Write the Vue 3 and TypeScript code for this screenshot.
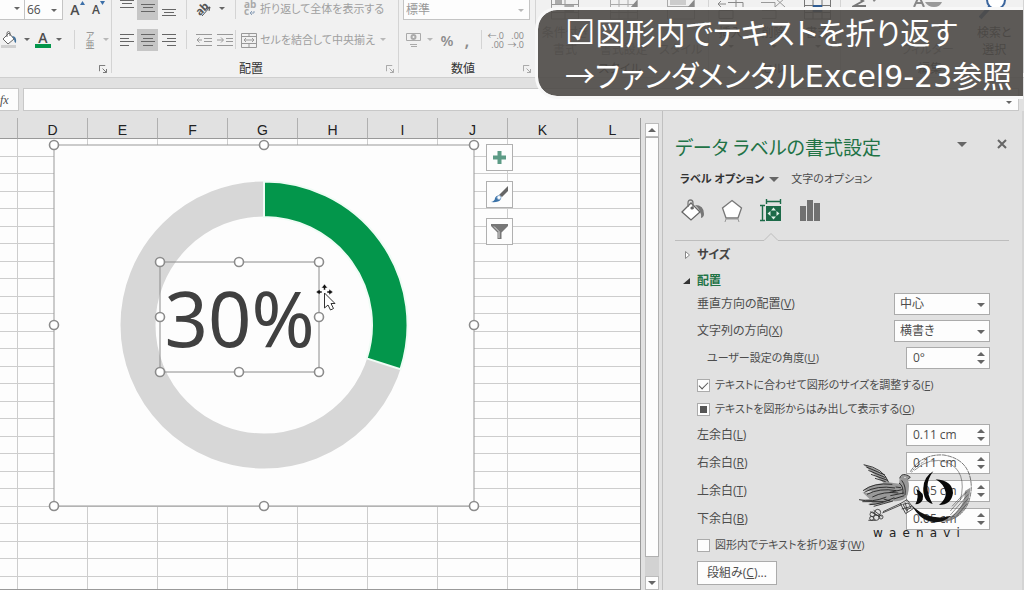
<script setup lang="ts">
import { ref } from 'vue'

interface Choice { id: string; label: string; key: string; value: string; options: string[] }
interface Margin { id: string; label: string; key: string; value: string }

const columns: string[] = ['', 'D', 'E', 'F', 'G', 'H', 'I', 'J', 'K', 'L']
const rowCount = 26

const choices: Choice[] = [
  { id: 'valign', label: '垂直方向の配置', key: 'V', value: '中心', options: ['上', '中心', '下'] },
  { id: 'direction', label: '文字列の方向', key: 'X', value: '横書き', options: ['横書き', '縦書き'] },
]
const margins = ref<Margin[]>([
  { id: 'left', label: '左余白', key: 'L', value: '0.11 cm' },
  { id: 'right', label: '右余白', key: 'R', value: '0.11 cm' },
  { id: 'top', label: '上余白', key: 'T', value: '0.05 cm' },
  { id: 'bottom', label: '下余白', key: 'B', value: '0.05 cm' },
])
const angle = ref('0°')
const fitShape = ref(true)
const wrapText = ref(false)

const chartHandles = [[0, 0], [210, 0], [420, 0], [0, 180], [420, 180], [0, 361], [210, 361], [420, 361]]
const labelHandles = [[0, 0], [79, 0], [159, 0], [0, 55], [159, 55], [0, 110], [79, 110], [159, 110]]
const brand = 'waenavi'.split('')
</script>

<template>
  <div class="app">
    <header class="ribbon">
      <section class="group font-group">
        <div class="line first">
          <button class="tool name-drop" aria-label="フォント"><i class="caret"></i></button>
          <span class="combo size-combo">
            <select aria-label="フォント サイズ"><option>66</option></select><i class="caret"></i>
          </span>
          <button class="tool w21 letter" aria-label="拡大">A<svg class="tick" viewBox="0 0 5 4"><path d="M0 4L2.500 0L5 4z" fill="#3c6fa8" /></svg></button>
          <button class="tool w21 letter small" aria-label="縮小">A<svg class="tick" viewBox="0 0 5 4"><path d="M0 0h5L2.500 4z" fill="#3c6fa8" /></svg></button>
        </div>
        <div class="line">
          <button class="tool w19" aria-label="塗りつぶし">
            <svg width="17" height="17" viewBox="0 0 17 17"><path d="M2 8l6-6 5 6-6 5z" fill="#fff" stroke="#666" /><path d="M6 6V1.500q1.500-2 3 0V5" fill="none" stroke="#666" /><path d="M11 5q5 0 4 7q-2-1-2-4z" fill="#41719c" /><path d="M0 14h15v3H0z" fill="#d0d0d0" /></svg>
          </button>
          <i class="caret pad"></i>
          <button class="tool w19 font-color" aria-label="フォントの色">A</button>
          <i class="caret pad"></i>
          <i class="bar"></i>
          <button class="tool ruby" aria-label="ふりがな"><span>ア</span><span>亜</span></button>
          <i class="caret pad pale"></i>
        </div>
        <div class="caption"><span></span><svg class="launch" viewBox="0 0 9 9"><path d="M.5 7V.5H7M4 4l4 4M8.500 4.500v4h-4" fill="none" stroke="#666" /></svg></div>
      </section>

      <section class="group align-group">
        <div class="line first">
          <button class="tool w21" aria-label="上揃え"><svg width="14" height="18"><path d="M0 .5h14M2 3.500h10M0 7.500h14" stroke="#666" /></svg></button>
          <button class="tool w21 on" aria-label="上下中央揃え"><svg width="14" height="18"><path d="M0 4.500h14M2 7.500h10M0 11.500h14" stroke="#666" /></svg></button>
          <button class="tool w21" aria-label="下揃え"><svg width="14" height="18"><path d="M0 9.500h14M2 12.500h10M0 15.500h14" stroke="#666" /></svg></button>
          <i class="bar"></i>
          <button class="tool w21" aria-label="方向"><svg width="18" height="18" viewBox="0 0 18 18"><text x="1" y="13" font-size="11" transform="rotate(-45 7 10)" fill="#555" font-weight="700">ab</text><path d="M7 16L15 7M15 7l-4 1M15 7l-1 4" fill="none" stroke="#555" /></svg></button>
          <i class="caret pad"></i>
          <i class="bar gap"></i>
          <button class="tool wide"><svg width="17" height="18" viewBox="0 0 17 18"><text x="3" y="8" font-size="10" fill="#aaa" font-weight="700">ab</text><text x="3" y="15" font-size="10" fill="#aaa" font-weight="700">c</text><path d="M9 13h4v-2M9 13l2-2M9 13l2 2" fill="none" stroke="#8ca0b8" /></svg>折り返して全体を表示する</button>
        </div>
        <div class="line">
          <button class="tool w21" aria-label="左揃え"><svg width="14" height="14"><path d="M0 1.500h14M0 5.500h9M0 8.500h14M0 12.500h9" stroke="#666" /></svg></button>
          <button class="tool w21 on" aria-label="中央揃え"><svg width="14" height="14"><path d="M0 1.500h14M2 5.500h10M0 8.500h14M2 12.500h10" stroke="#666" /></svg></button>
          <button class="tool w21" aria-label="右揃え"><svg width="14" height="14"><path d="M0 1.500h14M5 5.500h9M0 8.500h14M5 12.500h9" stroke="#666" /></svg></button>
          <i class="bar"></i>
          <button class="tool w21" aria-label="インデントを減らす"><svg width="16" height="14"><path d="M0 1.500h16M8 5.500h8M8 8.500h8M0 12.500h16M6 7H1M3.500 4.500L1 7l2.500 2.500" fill="none" stroke="#999" /></svg></button>
          <button class="tool w21" aria-label="インデントを増やす"><svg width="16" height="14"><path d="M0 1.500h16M9 5.500h7M9 8.500h7M0 12.500h16M0 7h6M4 4.500L6.500 7L4 9.500" fill="none" stroke="#999" /></svg></button>
          <i class="bar tight"></i>
          <button class="tool wide"><svg width="17" height="16" viewBox="0 0 17 16"><path d="M.5 1.500h15v14H.5zM.5 4.500h15M.5 11.500h15M8 1.500v3M8 11.500v4M3 8h10M5 6L3 8l2 2M11 6l2 2-2 2" fill="none" stroke="#999" /></svg>セルを結合して中央揃え</button>
          <i class="caret pad pale"></i>
        </div>
        <div class="caption"><span>配置</span><svg class="launch pale" viewBox="0 0 9 9"><path d="M.5 7V.5H7M4 4l4 4M8.500 4.500v4h-4" fill="none" stroke="#666" /></svg></div>
      </section>

      <section class="group number-group">
        <div class="line first">
          <span class="combo format-combo">
            <select aria-label="表示形式"><option>標準</option></select><i class="caret pale"></i>
          </span>
        </div>
        <div class="line">
          <button class="tool num" aria-label="通貨"><svg width="17" height="16" viewBox="0 0 17 16"><path d="M1.500 1.500h14v7h-14zM5 12.500h7M6 14.500h6" fill="none" stroke="#aaa" /><circle cx="8.500" cy="5" r="2" fill="none" stroke="#aaa" stroke-width="2" /></svg></button>
          <i class="caret pad pale"></i>
          <button class="tool num symbol">%</button>
          <button class="tool num symbol comma">,</button>
          <i class="bar"></i>
          <button class="tool num decimal"><span>←.0</span><span>.00</span></button>
          <button class="tool num decimal"><span>.00</span><span>→.0</span></button>
        </div>
        <div class="caption"><span>数値</span><svg class="launch pale" viewBox="0 0 9 9"><path d="M.5 7V.5H7M4 4l4 4M8.500 4.500v4h-4" fill="none" stroke="#666" /></svg></div>
      </section>

      <section class="group more style-group">
        <div class="bigs">
          <button class="big"><svg width="28" height="20"><path d="M.5-6v25h27V-6M.5 4.500h27M.5 12.500h27M14-1v20" fill="none" stroke="#999" /><path d="M4 0h7v4H4zM14 5h9v7h-9z" fill="#aaa" /></svg><span>条件付き<br>書式</span></button>
          <button class="big"><svg width="28" height="20"><path d="M.5-6v25h27V-6M.5 4.500h27M.5 12.500h27M9-1v20M18-1v20" fill="none" stroke="#aaa" /><path d="M20 8l7-8v8z" fill="#888" /></svg><span><br>書式設定</span></button>
          <button class="big"><svg width="28" height="20"><path d="M.5-6v25h27V-6M.5 6.500h27" fill="none" stroke="#aaa" /><path d="M3-1h16v6H3z" fill="#ccc" /><path d="M20 8l7-8v8z" fill="#888" /></svg><span><br>スタイル</span></button>
        </div>
        <div class="caption"><span>スタイル</span></div>
      </section>
      <section class="group more cell-group">
        <div class="bigs">
          <button class="big dark"><svg width="26" height="20"><path d="M0 4h8M3 1L0 4l3 3M10 2.500h15v5H10M1 10.500h14v8H1zM18-1v8" fill="none" stroke="#888" /></svg><span>挿入</span><i class="caret"></i></button>
          <button class="big dark"><svg width="26" height="20"><path d="M0 2.500h14v5H0M1 10.500h14v8H1M14-2l10 9M24-2L14 7" fill="none" stroke="#999" /></svg><span>削除</span><i class="caret"></i></button>
          <button class="big dark"><svg width="28" height="20"><path d="M.5-1v20h26V-1M.5 5.500h26M.5 12.500h26M9 0v19M18 0v19" fill="none" stroke="#777" /><path d="M9 5h9v7H9z" fill="#2f5c94" /></svg><span>書式</span><i class="caret"></i></button>
        </div>
        <div class="caption"><span>セル</span></div>
      </section>
      <section class="group more edit-group">
        <div class="bigs">
          <button class="big"><svg width="26" height="20"><path d="M5-3l6 4-9 5h12" fill="none" stroke="#777" stroke-width="2" /><path d="M20-1h5l-3 3z" fill="#888" /></svg></button>
          <button class="big"><svg width="30" height="20"><path d="M1 7L6-4l5 11M3 3h6" fill="none" stroke="#888" stroke-width="2" /><path d="M12 2h17q-2 5-8 5t-9-5z" fill="#999" /></svg><span><br>フィルター</span></button>
          <button class="big dark"><svg width="30" height="20"><circle cx="17" cy="0" r="9" fill="#fff" stroke="#3b659d" stroke-width="2" /><path d="M11 7L1 18" stroke="#3b659d" stroke-width="4" /></svg><span>検索と<br>選択</span></button>
        </div>
        <div class="caption"><span>編集</span></div>
      </section>
    </header>

    <div class="formula">
      <button class="fx" aria-label="関数の挿入"><em>fx</em></button>
      <div class="formula-box"><input type="text" aria-label="数式バー"><i class="caret"></i></div>
    </div>

    <div class="work">
      <main class="sheet">
        <table>
          <thead>
            <tr><th v-for="(c, i) in columns" :key="i" scope="col">{{ c }}</th></tr>
          </thead>
          <tbody>
            <tr v-for="r in rowCount" :key="r"><td v-for="(c, i) in columns" :key="i"></td></tr>
          </tbody>
        </table>

        <div class="chart">
          <svg class="art" width="420" height="361" viewBox="0 0 420 361">
            <rect width="420" height="361" fill="#fdfdfd" stroke="#999" />
            <circle cx="210" cy="180" r="126" fill="none" stroke="#d7d7d7" stroke-width="35" />
            <path d="M210 36.500A143.500 143.500 0 0 1 346.500 224.300L312.700 213.400A108 108 0 0 0 210 72z" fill="#03964b" stroke="#effcf5" stroke-width="2" />
            <circle v-for="(h, i) in chartHandles" :key="i" :cx="h[0]" :cy="h[1]" r="4.500" fill="#fff" stroke="#8c8c8c" stroke-width="1.600" />
          </svg>
          <div class="data-label">
            <span>30%</span>
            <svg class="art" width="159" height="110" viewBox="0 0 159 110">
              <rect width="159" height="110" fill="none" stroke="#8c8c8c" />
              <circle v-for="(h, i) in labelHandles" :key="i" :cx="h[0]" :cy="h[1]" r="4.500" fill="#fff" stroke="#8c8c8c" stroke-width="1.600" />
            </svg>
          </div>
          <svg class="pointer" width="20" height="28" viewBox="0 0 20 28">
            <path d="M8.500 0l3 4h-2v2h-2V4h-2zM0 8l4-3v2h2v2H4v2zM17 8l-4-3v2h-2v2h2v2z" fill="#111" stroke="#fff" stroke-width=".5" />
            <path d="M8.500 9v15l3.500-3 2.500 5 3-1.500-2.500-5h4z" fill="#fff" stroke="#333" />
          </svg>
        </div>
        <div class="chart-tools">
          <button aria-label="グラフ要素"><svg width="15" height="15"><path d="M7.500 1v13M1 7.500h13" stroke="#5d9b86" stroke-width="4" /></svg></button>
          <button aria-label="グラフ スタイル"><svg width="19" height="19" viewBox="0 0 19 19"><path d="M18 1v5l-6 6-3-2z" fill="#666" /><path d="M1 17q4-1 4-4 2-4 5-1 2 3-2 4.500-3 1-7 .5z" fill="#3c73a8" /><circle cx="9" cy="12.500" r="2" fill="#fff" stroke="#8badd0" /></svg></button>
          <button aria-label="グラフ フィルター"><svg width="19" height="19" viewBox="0 0 19 19"><path d="M1 2h17v2l-6.500 6.500V17h-4v-6.500L1 4z" fill="#777" /><path d="M4 4.500l5 5V16" fill="none" stroke="#ddd" /></svg></button>
        </div>
      </main>

      <div class="scroll">
        <button aria-label="上へ"><i class="caret up"></i></button>
        <div class="thumb"></div>
        <div class="track"></div>
        <button aria-label="下へ"><i class="caret"></i></button>
      </div>

      <aside class="pane">
        <div class="pane-head">
          <h1>データ ラベルの書式設定</h1>
          <button class="tool menu" aria-label="作業ウィンドウ オプション"><i class="caret big-caret"></i></button>
          <button class="tool" aria-label="閉じる"><svg width="10" height="10"><path d="M1 1l8 8M9 1L1 9" stroke="#666" stroke-width="2" /></svg></button>
        </div>
        <nav class="tabs">
          <button class="tool active">ラベル オプション<i class="caret big-caret"></i></button>
          <button class="tool">文字のオプション</button>
        </nav>
        <div class="pane-icons">
          <button class="tool" aria-label="塗りつぶしと線"><svg width="24" height="24" viewBox="0 0 24 24"><path d="M1 13L10 4l9 9-9 8z" fill="#fff" stroke="#666" stroke-width="1.300" /><path d="M7 8V4q0-3 2.500-3T12 4v6" fill="none" stroke="#777" stroke-width="1.300" /><circle cx="11" cy="9" r="1.600" fill="#666" /><path d="M14 6q9 0 9 9 0 3-3 4 1-7-6-13z" fill="#777" /></svg></button>
          <button class="tool" aria-label="効果"><svg width="24" height="24" viewBox="0 0 24 24"><path d="M12 1.500l9.500 7.500-3.500 10H6L2.500 9z" fill="#fff" stroke="#777" stroke-width="1.300" /><path d="M6 20l-1 3M18 20l1 3M6 20h12" stroke="#999" /></svg></button>
          <button class="tool" aria-label="サイズとプロパティ"><svg width="24" height="24" viewBox="0 0 24 24"><path d="M7 7h15v15H7z" fill="#1c6a48" /><path d="M7.500 0v5M21.500 0v5M8 2.500h13M1 6.500h5M1 21.500h5M3.500 7v14" stroke="#1c6a48" stroke-width="1.400" /><path d="M14.500 8.500l2.500 3h-5zM14.500 20.500l2.500-3h-5zM8.500 14.500l3-2.500v5zM20.500 14.500l-3-2.500v5z" fill="#e1f0e8" /></svg></button>
          <button class="tool" aria-label="ラベル オプション"><svg width="24" height="24" viewBox="0 0 24 24"><path d="M2 7h6v15H2zM9 1h6v21H9zM16 4h6v18h-6z" fill="#707070" /></svg></button>
        </div>
        <div class="rule"><i></i><svg width="14" height="8"><path d="M0 7.500L7 .5l7 7" fill="none" stroke="#bdbdbd" /></svg><i class="rest"></i></div>

        <button class="tool section"><svg width="12" height="10"><path d="M3.500 1.500v7l4-3.500z" fill="#fff" stroke="#888" /></svg>サイズ</button>
        <button class="tool section open"><svg width="12" height="10"><path d="M8 2v6H1z" fill="#333" /></svg>配置</button>

        <div v-for="c in choices" :key="c.id" class="field">
          <label :for="c.id">{{ c.label }}(<u>{{ c.key }}</u>)</label>
          <span class="combo">
            <select :id="c.id" :value="c.value"><option v-for="o in c.options" :key="o">{{ o }}</option></select><i class="caret"></i>
          </span>
        </div>
        <div class="field indent">
          <label for="angle">ユーザー設定の角度(<u>U</u>)</label>
          <span class="spin"><input id="angle" v-model="angle" type="text"><span class="steps"><button aria-label="増やす"><i class="caret up"></i></button><button aria-label="減らす"><i class="caret"></i></button></span></span>
        </div>
        <label class="check"><input v-model="fitShape" type="checkbox"><span>テキストに合わせて図形のサイズを調整する(<u>F</u>)</span></label>
        <label class="check"><input type="checkbox" :indeterminate="true"><span>テキストを図形からはみ出して表示する(<u>O</u>)</span></label>
        <div v-for="m in margins" :key="m.id" class="field margin">
          <label :for="m.id">{{ m.label }}(<u>{{ m.key }}</u>)</label>
          <span class="spin"><input :id="m.id" v-model="m.value" type="text"><span class="steps"><button aria-label="増やす"><i class="caret up"></i></button><button aria-label="減らす"><i class="caret"></i></button></span></span>
        </div>
        <label class="check"><input v-model="wrapText" type="checkbox"><span>図形内でテキストを折り返す(<u>W</u>)</span></label>
        <button class="columns">段組み(<u>C</u>)...</button>

        <div class="mark">
          <svg width="115" height="73" viewBox="50 36 345 219">
            <g fill="none" stroke="#333" stroke-width="2">
              <path d="M210 92Q245 38 310 42Q392 55 393 140Q388 226 315 240" stroke-dasharray="14 2" />
              <path d="M222 88Q270 45 320 64Q382 90 360 178" stroke-width="1.500" />
              <path d="M214 94Q225 74 252 62" stroke-dasharray="5 3" />
            </g>
            <path d="M218 198Q270 250 328 228Q372 204 374 150L390 140Q388 212 332 238Q262 258 218 198z" fill="#777" fill-opacity=".75" />
            <path d="M214 192Q258 240 330 226Q300 254 258 238Q232 226 214 192z" fill="#111" />
            <path d="M335 196l40-42M330 210l50-58M330 222l54-62M336 228l48-56M348 226l32-38" stroke="#333" stroke-width="1.500" />
            <g fill="#080808">
              <path d="M228 144Q254 156 247 176Q242 188 225 190Q237 168 228 144z" />
              <path d="M279 91Q245 134 277 189Q248 182 249 141Q251 106 279 91z" />
              <path d="M286 115Q336 118 338 156Q333 192 296 192Q318 174 316 154Q312 130 286 115z" />
            </g>
            <path d="M178 112Q182 100 194 101Q204 103 210 109L202 115Q210 134 202 162Q190 184 156 180Q116 192 88 192Q76 190 98 184L56 176L88 174L66 154Q88 158 96 152L70 148Q90 130 130 126L86 86L70 71Q124 84 144 124L176 128z" fill="#999" />
            <g fill="none" stroke="#1a1a1a" stroke-width="2.500">
              <path d="M70 71Q130 82 145 124M78 78l56 24M84 88l52 22M92 100l50 18M104 112l32 10" />
              <path d="M68 149Q100 124 156 130M72 154Q110 132 164 141M80 160Q118 140 168 149M96 168Q130 150 174 156" />
              <path d="M56 176Q96 186 138 168M66 182l64 0M88 191Q120 190 162 170M100 196Q130 188 158 180" />
              <path d="M176 126Q190 134 188 160M184 118q14 18 10 44M178 112q4-14 18-11 8 2 14 8l-8 6" />
              <path d="M148 154l38-8M150 164l40-8M160 174l32-10M166 138l16 2M130 174l20 6" />
            </g>
            <circle cx="194" cy="109" r="2" fill="#fff" />
            <g fill="none" stroke="#333" stroke-width="2.500">
              <path d="M126 216l60-26M128 212l54-25M180 188l20-12 20 26-24 16zM188 190l16-4 8 14-14 8zM194 184l8 28M184 204l30-8" />
              <circle cx="112" cy="214" r="9" /><circle cx="96" cy="220" r="7" /><circle cx="94" cy="232" r="6" /><circle cx="108" cy="230" r="8" /><circle cx="122" cy="228" r="6" /><path d="M100 208l24 18M84 238h22M90 212l30 16" />
            </g>
          </svg>
          <div class="brand"><span v-for="(b, i) in brand" :key="i">{{ b }}</span></div>
        </div>
      </aside>
    </div>

    <div class="banner">
      <p><span class="sym">☑</span>図形内でテキストを折り返す</p>
      <p><span class="arrow">→</span>ファンダメンタルExcel9-23参照</p>
    </div>
  </div>
</template>

<style>
body { background: #f3f3f3; }
</style>

<style scoped>
* { box-sizing: border-box; }
.app {
  position: relative;
  display: flex;
  flex-direction: column;
  padding-bottom: 1px;
  overflow: hidden;
  background: #e1e1e1;
  color: #4d4d4d;
  font: 12px/18px "Open Sans", "Noto Sans CJK JP", sans-serif;
  font-feature-settings: "palt";
}
button, input, select { font: inherit; font-feature-settings: inherit; color: inherit; margin: 0; padding: 0; border: 0; border-radius: 0; background: none; }
select { appearance: none; width: 100%; height: 100%; }
.tool { display: inline-flex; align-items: center; justify-content: center; flex: none; height: 22px; }
svg { flex: none; }
.caret { display: inline-block; flex: none; width: 0; height: 0; border: 3px solid transparent; border-top-color: #666; border-bottom: 0; }
.caret.up { border-top: 0; border-bottom: 3px solid #666; }
.caret.pale { border-top-color: #b8b8b8; }
.caret.pad { margin: 0 5px; }
.big-caret { border-width: 5px 5px 0; }
.combo { position: relative; display: inline-flex; background: #fdfdfd; border: 1px solid #ababab; }
.combo .caret { position: absolute; right: 5px; top: 50%; margin-top: -1px; pointer-events: none; }

.ribbon { display: flex; height: 78px; background: #f1f1f1; border-bottom: 1px solid #cfcfcf; }
.group { display: flex; flex-direction: column; flex: none; height: 73px; border-right: 1px solid #d4d4d4; white-space: nowrap; }
.line { display: flex; align-items: center; height: 23px; margin-top: 8px; }
.line.first { height: 20px; margin-top: 0; align-items: flex-start; }
.line.first > .caret, .line.first > .caret.pad { margin-top: 7px; }
.w19 { width: 19px; }
.w21 { width: 21px; }
.on { background: #c6c6c6; }
.line.first .tool { height: 20px; align-items: flex-start; }
.bar { flex: none; width: 1px; height: 19px; margin: 0 7px; background: #d4d4d4; }
.caption { display: flex; align-items: center; height: 18px; margin-top: auto; margin-bottom: -5px; padding-right: 4px; color: #333; }
.caption span { flex: 1; text-align: center; }
.launch { width: 8px; height: 8px; }
.launch.pale { opacity: .6; }

.font-group { width: 112px; }
.name-drop { width: 24px; padding: 7px 0 0 10px; background: #fdfdfd; border-bottom: 1px solid #c4c4c4; }
.size-combo { width: 39px; height: 20px; margin-right: 4px; border-top: 0; border-color: #c4c4c4; }
.size-combo select { padding-left: 2px; }
.letter { font-size: 14px; line-height: 20px; font-weight: 600; }
.letter.small { font-size: 12px; }
.tick { width: 5px; height: 4px; margin-top: 1px; }
.font-color { height: 17px; border-bottom: 4px solid #03964b; font-size: 14px; line-height: 14px; font-weight: 600; width: 16px; }
.ruby { flex-direction: column; width: 16px; font-size: 9px; line-height: 9px; color: #888; }
.align-group { width: 287px; padding-left: 4px; }
.align-group .bar { margin-right: 6px; }
.align-group .bar.gap { margin: 0 5px 0 5px; }
.align-group .bar.tight { margin: 0 5px 0 0; }
.align-group .wide { color: #a0a0a0; gap: 2px; justify-content: flex-start; font-size: 11px; }
.number-group { width: 137px; padding: 0 4px; }
.number-group .caption { padding-right: 0; }
.number-group .pad { margin: 0 4px; }
.number-group .bar { margin: 0 4px; }
.num { width: 20px; }
.format-combo { width: 127px; height: 20px; border-top: 0; color: #999; border-color: #c4c4c4; }
.format-combo select { padding-left: 2px; }
.symbol { font-size: 15px; color: #8c8c8c; font-weight: 600; }
.comma { height: 30px; font-size: 18px; }
.decimal { flex-direction: column; font-size: 9px; line-height: 9px; color: #888; align-items: flex-end; padding-right: 2px; }
.more { color: #888; }
.style-group { width: 173px; }
.cell-group { width: 132px; }
.edit-group { flex: 1; }
.bigs { display: flex; justify-content: space-around; }
.big { display: flex; flex-direction: column; align-items: center; gap: 4px; line-height: 17px; color: #888; overflow: hidden; }
.big.dark { color: #333; }

.formula { display: flex; gap: 4px; height: 33px; padding: 10px 5px 0 0; }
.fx { width: 19px; height: 23px; background: #fdfdfd; border: 1px solid #c8c8c8; border-left: 0; text-align: left; font-family: "Liberation Serif", serif; }
.formula-box { display: flex; align-items: center; flex: 1; height: 23px; padding-right: 6px; background: #fdfdfd; border: 1px solid #c8c8c8; }
.formula-box input { flex: 1; min-width: 0; }
.formula-box .caret { margin-top: 6px; }

.work { display: flex; }
.sheet { position: relative; flex: 1; min-width: 0; padding-top: 7px; margin-right: 4px; }
table { width: 100%; table-layout: fixed; border-collapse: separate; border-spacing: 0; background: #fdfdfd; border-right: 1px solid #999; border-bottom: 1px solid #999; }
th { width: 70px; height: 21px; padding: 4px 0 0; background: #e1e1e1; border-right: 1px solid #b0b0b0; border-bottom: 1px solid #999; font: 14px/16px "Liberation Sans", sans-serif; color: #222; }
th:first-child { width: 18px; }
th:last-child { width: auto; border-right-color: #e1e1e1; padding-left: 8px; }
td { height: 18px; padding: 0; border-right: 1px solid #cdcdcd; border-bottom: 1px solid #cdcdcd; }
td:last-child { border-right: 0; }
tr:nth-child(even) td { height: 17px; }
tr:last-child td { height: 12px; border-bottom: 0; }

.chart { position: absolute; left: 54px; top: 34px; width: 420px; height: 361px; }
.art { position: absolute; inset: 0; overflow: visible; }
.data-label { position: absolute; left: 106px; top: 117px; width: 159px; height: 110px; text-align: center; font: 76px/112px "Noto Sans", sans-serif; color: #404040; }
.pointer { position: absolute; left: 262px; top: 139px; }
.chart-tools { position: absolute; left: 486px; top: 33px; display: flex; flex-direction: column; gap: 10px; }
.chart-tools button { display: grid; place-items: center; width: 27px; height: 27px; background: #fdfdfd; border: 1px solid #b0b0b0; }

.scroll { display: flex; flex-direction: column; width: 14px; margin: 12px 3px 0 0; }
.scroll button { display: grid; place-items: center; height: 14px; background: #fdfdfd; border: 1px solid #bbb; }
.scroll .caret { border-width: 4px 4px 0; }
.scroll .caret.up { border-width: 0 4px 4px; }
.thumb { flex: 1; background: #fdfdfd; border: 1px solid #b0b0b0; }
.track { height: 19px; background: #d2d2d2; }

.pane { position: relative; flex: none; width: 362px; padding: 23px 32px 0 34px; border-left: 1px solid #c0c0c0; border-right: 2px solid #d4d4d4; }
.pane-head { display: flex; align-items: center; height: 28px; margin: 0 -17px 0 -22px; }
h1 { flex: 1; margin: 0; font-size: 19px; line-height: 30px; font-weight: 400; color: #217346; white-space: nowrap; }
.pane-head .tool { height: 20px; margin-bottom: 8px; }
.menu { margin-right: 30px; }
.tabs { display: flex; gap: 12px; margin: 8px 0 0 -17px; }
.tabs .tool { height: 18px; gap: 5px; font-size: 11px; }
.tabs .active { font-weight: 600; color: #333; }
.pane-icons { display: flex; gap: 15px; margin: 10px 0 0 -16px; }
.pane-icons .tool { height: 26px; }
.rule { display: flex; align-items: flex-end; height: 8px; margin: 9px -19px 0 -22px; }
.rule i { width: 89px; height: 1px; background: #bdbdbd; }
.rule .rest { width: auto; flex: 1; }
.section { display: flex; gap: 3px; height: 18px; margin: 5px 0 0 -15px; font-weight: 700; color: #444; }
.section.open { margin-top: 8px; color: #217346; margin-bottom: 3px; }
.field { display: flex; align-items: center; justify-content: space-between; height: 22px; margin-bottom: 5px; }
.field.margin { margin-bottom: 6px; }
.field .combo { width: 96px; height: 22px; }
.field .combo select { padding-left: 5px; }
.field .combo .caret { right: 4px; border-width: 4px 4px 0; }
.field.indent { padding-left: 10px; margin-bottom: 7px; }
.indent label { font-size: 11px; }
.spin { display: flex; width: 84px; height: 22px; background: #fdfdfd; border: 1px solid #ababab; }
.spin input { flex: 1; min-width: 0; padding-left: 6px; }
.steps { display: flex; flex-direction: column; justify-content: center; gap: 3px; width: 12px; }
.steps button { display: flex; height: 5px; align-items: center; }
.steps .caret { border-width: 4px 4px 0; }
.steps .caret.up { border-width: 0 4px 4px; }
.check { display: flex; align-items: center; gap: 5px; height: 18px; margin-bottom: 6px; font-size: 11px; white-space: nowrap; }
.check input { appearance: none; display: grid; place-items: center; flex: none; width: 13px; height: 13px; background: #fdfdfd; border: 1px solid #ababab; }
.check input:indeterminate::before { content: ""; width: 7px; height: 7px; background: #555; }
.check input:checked::before { content: ""; width: 8px; height: 4px; margin-top: -2px; border: solid #555; border-width: 0 0 1px 1px; transform: rotate(-45deg); }
.columns { display: block; width: 80px; height: 24px; margin-top: 7px; background: #fdfdfd; border: 1px solid #ababab; }

.mark { position: absolute; right: 50px; top: 342px; width: 115px; color: #222; pointer-events: none; }
.mark svg { display: block; }
.brand { display: flex; justify-content: space-between; padding: 0 12px 0 16px; font: 12px/14px "DejaVu Sans", sans-serif; }

.banner { position: absolute; left: 535px; right: 1px; top: 7px; padding-left: 27px; background: rgba(78, 75, 71, .91); background-clip: padding-box; border: 3px solid #f8f8f8; border-right: 0; border-radius: 22px 0 0 22px; color: #fff; font: 30px/43px "DejaVu Sans", "Noto Sans CJK JP", sans-serif; font-feature-settings: "palt"; white-space: nowrap; }
.banner p { height: 43px; margin: 0; }
.arrow, .sym { font-family: "Noto Sans CJK JP", "DejaVu Sans", sans-serif; }
.sym { font-size: 34px; line-height: 40px; }
</style>
